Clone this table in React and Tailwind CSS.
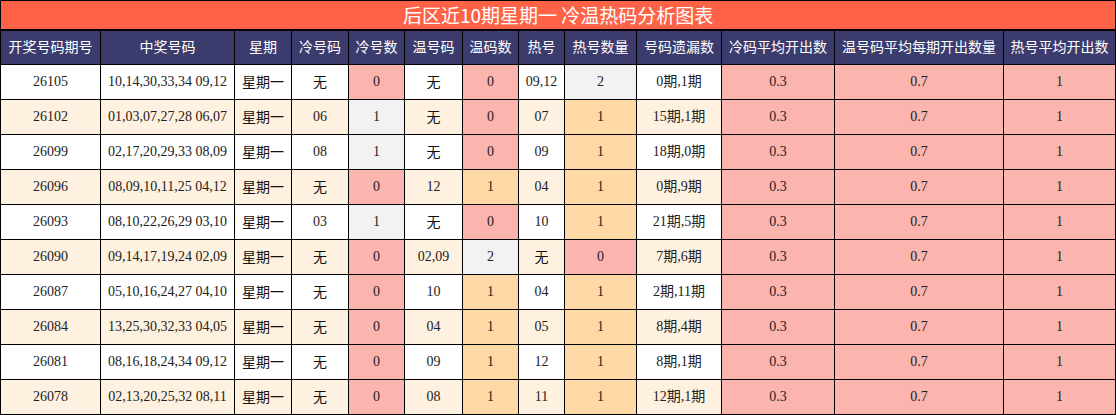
import React from 'react';

const PINK = 'bg-[#fbb4ae]';
const ORANGE = 'bg-[#fed9a6]';
const GRAY = 'bg-[#f2f2f2]';
const CJK = "text-[#111] font-['Noto_Sans_CJK_SC',sans-serif]";

const headers = [
    '开奖号码期号', '中奖号码', '星期', '冷号码', '冷号数', '温号码', '温码数',
    '热号', '热号数量', '号码遗漏数', '冷码平均开出数', '温号码平均每期开出数量', '热号平均开出数',
];

const widths = [100, 134, 57, 57, 56, 58, 56, 46, 72, 85, 113, 169, 112];

const rows = [
    ['26105', '10,14,30,33,34 09,12', '无', '0', '无', '0', '09,12', '2', '0期,1期'],
    ['26102', '01,03,07,27,28 06,07', '06', '1', '无', '0', '07', '1', '15期,1期'],
    ['26099', '02,17,20,29,33 08,09', '08', '1', '无', '0', '09', '1', '18期,0期'],
    ['26096', '08,09,10,11,25 04,12', '无', '0', '12', '1', '04', '1', '0期,9期'],
    ['26093', '08,10,22,26,29 03,10', '03', '1', '无', '0', '10', '1', '21期,5期'],
    ['26090', '09,14,17,19,24 02,09', '无', '0', '02,09', '2', '无', '0', '7期,6期'],
    ['26087', '05,10,16,24,27 04,10', '无', '0', '10', '1', '04', '1', '2期,11期'],
    ['26084', '13,25,30,32,33 04,05', '无', '0', '04', '1', '05', '1', '8期,4期'],
    ['26081', '08,16,18,24,34 09,12', '无', '0', '09', '1', '12', '1', '8期,1期'],
    ['26078', '02,13,20,25,32 08,11', '无', '0', '08', '1', '11', '1', '12期,1期'],
];

// 冷号数: 0 粉 / 1 灰
const coldColor = (v) => (v === '0' ? PINK : GRAY);
// 温码数、热号数量: 0 粉 / 1 橙 / 2 灰
const countColor = (v) => (v === '0' ? PINK : v === '1' ? ORANGE : GRAY);

const Cell = ({ children, className = '' }) => (
    <td className={`border border-black text-center p-0 pb-[1px] h-[35px] ${className}`}>{children}</td>
);

const App = () => {
    return (
        <div
            className="w-[1116px] h-[415px] bg-white text-[14px] text-[#222]"
            style={{ fontFamily: '"Liberation Serif", "Noto Sans CJK SC", serif' }}
        >
            <table className="w-[1116px] table-fixed border-collapse">
                <colgroup>
                    {widths.map((w, i) => (
                        <col key={i} style={{ width: w }} />
                    ))}
                </colgroup>
                <thead>
                    <tr>
                        <th
                            colSpan={13}
                            className="h-[29px] p-0 border border-black border-b-2 bg-[#ff6347] text-white text-[19px] font-normal leading-[26px] font-['Noto_Sans_CJK_SC',sans-serif]"
                        >
                            后区近10期星期一&nbsp;冷温热码分析图表
                        </th>
                    </tr>
                    <tr>
                        {headers.map((h) => (
                            <th
                                key={h}
                                className="h-[35px] p-0 pb-[1px] border border-black bg-[#3b3b6d] text-white text-[14px] font-normal whitespace-nowrap font-['Noto_Sans_CJK_SC',sans-serif]"
                            >
                                {h}
                            </th>
                        ))}
                    </tr>
                </thead>
                <tbody>
                    {rows.map((r, i) => {
                        const rowBg = i % 2 === 0 ? 'bg-white' : 'bg-[#fff1df]';
                        return (
                            <tr key={r[0]} className={rowBg}>
                                <Cell>{r[0]}</Cell>
                                <Cell>{r[1]}</Cell>
                                <Cell className={CJK}>星期一</Cell>
                                <Cell className={r[2] === '无' ? CJK : ''}>{r[2]}</Cell>
                                <Cell className={coldColor(r[3])}>{r[3]}</Cell>
                                <Cell className={r[4] === '无' ? CJK : ''}>{r[4]}</Cell>
                                <Cell className={countColor(r[5])}>{r[5]}</Cell>
                                <Cell className={r[6] === '无' ? CJK : ''}>{r[6]}</Cell>
                                <Cell className={countColor(r[7])}>{r[7]}</Cell>
                                <Cell>{r[8]}</Cell>
                                <Cell className={PINK}>0.3</Cell>
                                <Cell className={PINK}>0.7</Cell>
                                <Cell className={PINK}>1</Cell>
                            </tr>
                        );
                    })}
                </tbody>
            </table>
        </div>
    );
};

export default App;
